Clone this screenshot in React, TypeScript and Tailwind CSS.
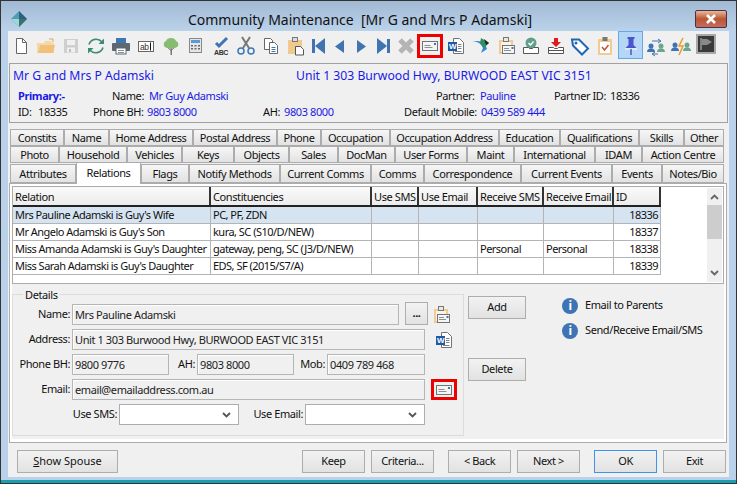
import type { ReactNode } from "react";

const font = "font-['Noto_Sans','Liberation_Sans',sans-serif]";

const tabRows = [
  [
    ["Constits", "w-[54px]"],
    ["Name", "w-[45px]"],
    ["Home Address", "w-[84px]"],
    ["Postal Address", "w-[84px]"],
    ["Phone", "w-[44px]"],
    ["Occupation", "w-[69px]"],
    ["Occupation Address", "w-[109px]"],
    ["Education", "w-[61px]"],
    ["Qualifications", "w-[79px]"],
    ["Skills", "w-[45px]"],
    ["Other", "w-[40px]"],
  ],
  [
    ["Photo", "w-[49px]"],
    ["Household", "w-[68px]"],
    ["Vehicles", "w-[55px]"],
    ["Keys", "w-[52px]"],
    ["Objects", "w-[55px]"],
    ["Sales", "w-[49px]"],
    ["DocMan", "w-[57px]"],
    ["User Forms", "w-[72px]"],
    ["Maint", "w-[47px]"],
    ["International", "w-[81px]"],
    ["IDAM", "w-[47px]"],
    ["Action Centre", "w-[82px]"],
  ],
  [
    ["Attributes", "w-[66px]"],
    ["Relations", "w-[65px]"],
    ["Flags", "w-[48px]"],
    ["Notify Methods", "w-[91px]"],
    ["Current Comms", "w-[91px]"],
    ["Comms", "w-[53px]"],
    ["Correspondence", "w-[97px]"],
    ["Current Events", "w-[91px]"],
    ["Events", "w-[50px]"],
    ["Notes/Bio", "w-[62px]"],
  ],
];

const columns = "grid grid-cols-[198px_161px_47px_59px_66px_70px_47px]";
const headers = ["Relation", "Constituencies", "Use SMS", "Use Email", "Receive SMS", "Receive Email", "ID"];
const rows = [
  ["Mrs Pauline Adamski is Guy's Wife", "PC, PF, ZDN", "", "", "", "", "18336"],
  ["Mr Angelo Adamski is Guy's Son", "kura, SC (S10/D/NEW)", "", "", "", "", "18337"],
  ["Miss Amanda Adamski is Guy's Daughter", "gateway, peng, SC (J3/D/NEW)", "", "", "Personal", "Personal", "18338"],
  ["Miss Sarah Adamski is Guy's Daughter", "EDS, SF (2015/S7/A)", "", "", "", "", "18339"],
];

function Svg({ children }: { children: ReactNode }) {
  return (
    <svg width="24" height="24" viewBox="0 0 24 24" fill="none" className="shrink-0">
      {children}
    </svg>
  );
}

function MailIcon() {
  return (
    <Svg>
      <rect x="4.500" y="7.500" width="15" height="9" fill="#f4f4f4" stroke="#6f7478" />
      <path d="M6.500 11.500h6M6.500 13.500h8" stroke="#8a8f94" />
      <rect x="16" y="9" width="2" height="2" fill="#3f74b4" />
    </Svg>
  );
}

function WordIcon() {
  return (
    <Svg>
      <path d="M9.500 4.500h6l4 4v11h-10z" fill="#fff" stroke="#6f7478" />
      <path d="M14 10.500h3.500M14 12.500h3.500M14 14.500h3.500M11 17.500h6.500" stroke="#7d8287" />
      <rect x="4" y="8" width="9" height="9" fill="#1f5aa6" />
      <text x="8.500" y="15" textAnchor="middle" fontSize="8" fontWeight="700" fill="#fff" fontFamily="Liberation Sans">
        W
      </text>
    </Svg>
  );
}

function PasteMailIcon() {
  return (
    <Svg>
      <path d="M5 6h14v14H5z" fill="#f0cb93" />
      <path d="M7 8h10v10H7z" fill="#fbf3e3" />
      <rect x="9.500" y="3.500" width="5" height="4" fill="#e8e8e8" stroke="#777" />
      <rect x="8.500" y="11.500" width="12" height="8" fill="#f5f5f5" stroke="#6f7478" />
      <path d="M10 14.500h5M10 16.500h7" stroke="#8a8f94" />
      <rect x="17.500" y="13" width="2" height="2" fill="#3f74b4" />
    </Svg>
  );
}

const toolbar: { slot: string; icon: ReactNode; active?: boolean; red?: boolean }[] = [
  { slot: "w-[25px]", icon: <Svg><path d="M7.500 4.500h6l4 4v11h-10z" fill="#fff" stroke="#666" /><path d="M13.500 4.500v4h4" stroke="#666" /></Svg> },
  { slot: "w-[25px]", icon: <Svg><path d="M3 9h7l1-2h6l1 2h2v10H3z" fill="#f5d8a8" /><path d="M4 19l2-8h15l-2 8z" fill="#f2c078" /><path d="M15 5h4v3" stroke="#d9a75c" /></Svg> },
  { slot: "w-[25px]", icon: <Svg><path d="M5 5h14v14H5z" fill="#cfcfcf" /><rect x="8" y="6" width="8" height="5" fill="#f0f0f0" /><rect x="8" y="13.500" width="8" height="5" fill="#f0f0f0" /><rect x="10" y="15" width="2" height="3" fill="#bdbdbd" /></Svg> },
  { slot: "w-[25px]", icon: <Svg><path d="M5 10.500a7.500 7.500 0 0 1 13-2.500" stroke="#3d8b78" strokeWidth="1.600" /><path d="M19 13.500a7.500 7.500 0 0 1-13 2.500" stroke="#3d8b78" strokeWidth="1.600" /><path d="M20 4.500v5.500h-5.500zM4 19.500v-5.500h5.500z" fill="#3d8b78" /></Svg> },
  { slot: "w-[25px]", icon: <Svg><rect x="7" y="4" width="10" height="6" fill="#3f77b5" /><rect x="3" y="9" width="18" height="8" rx="1" fill="#5d6870" /><rect x="7" y="14" width="10" height="6" fill="#fff" stroke="#5d6870" /><path d="M9 16.500h6M9 18.500h6" stroke="#8a8f94" /></Svg> },
  { slot: "w-[25px]", icon: <Svg><rect x="4.500" y="7.500" width="15" height="10" fill="#fff" stroke="#666" /><text x="6" y="15.500" fontSize="8.500" fill="#333" fontFamily="Liberation Sans">ab</text><path d="M16.500 8.500v8" stroke="#111" /></Svg> },
  { slot: "w-[25px]", icon: <Svg><path d="M11.500 13h1.500v8h-1.500z" fill="#777" /><path d="M8.500 13.500l3.500 3 3.500-3" stroke="#777" /><path d="M12 4c3 0 4 1 5 3 3 1 3 6 0 6.500-2 1.500-8 1.500-10 0-3-.5-3-5.500 0-6.500 1-2 2-3 5-3z" fill="#86bb72" /></Svg> },
  { slot: "w-[25px]", icon: <Svg><rect x="5.500" y="4.500" width="12" height="14" fill="#e6e6e6" stroke="#888" /><rect x="7" y="6" width="9" height="3" fill="#5b9bd5" /><path d="M7 11h2v1.500H7zM10.500 11h2v1.500h-2zM14 11h2v1.500h-2zM7 14h2v1.500H7zM10.500 14h2v1.500h-2zM14 14h2v1.500h-2z" fill="#666" /></Svg> },
  { slot: "w-[25px]", icon: <Svg><path d="M7 9l3 3 8-8" stroke="#3f74b4" strokeWidth="3" /><text x="12" y="21" textAnchor="middle" fontSize="7" fontWeight="700" fill="#333" fontFamily="Liberation Sans">ABC</text></Svg> },
  { slot: "w-[25px]", icon: <Svg><path d="M8 3l7 11M16 3l-7 11" stroke="#777" strokeWidth="2" /><circle cx="7" cy="17" r="3" stroke="#3f77b5" strokeWidth="1.500" /><circle cx="17" cy="17" r="3" stroke="#3f77b5" strokeWidth="1.500" /></Svg> },
  { slot: "w-[25px]", icon: <Svg><path d="M5.500 4.500h6l2 2v9h-8z" fill="#fff" stroke="#666" /><path d="M10.500 8.500h5l3 3v8h-8z" fill="#fff" stroke="#666" /><path d="M12.500 13.500h4M12.500 15.500h4M12.500 17.500h4" stroke="#3f77b5" /></Svg> },
  { slot: "w-[25px]", icon: <Svg><path d="M4 6h14v14H4z" fill="#f0c98f" /><rect x="8.500" y="3.500" width="5" height="4" fill="#ddd" stroke="#777" /><path d="M11.500 12.500h5l3 3v5.500h-8z" fill="#fff" stroke="#555" /></Svg> },
  { slot: "w-[21px]", icon: <Svg><path d="M5 5h3v14H5z" fill="#3f74b0" /><path d="M18 4v16L8 12z" fill="#3f74b0" /></Svg> },
  { slot: "w-[21px]", icon: <Svg><path d="M16 6v13l-9-6.500z" fill="#3f74b0" /></Svg> },
  { slot: "w-[22px]", icon: <Svg><path d="M8 6v13l9-6.500z" fill="#3f74b0" /></Svg> },
  { slot: "w-[21px]", icon: <Svg><path d="M16 5h3v14h-3z" fill="#3f74b0" /><path d="M6 4v16l10-8z" fill="#3f74b0" /></Svg> },
  { slot: "w-[25px]", icon: <Svg><path d="M6 6l12 12M18 6L6 18" stroke="#b4b4b4" strokeWidth="5" /></Svg> },
  { slot: "w-[25px]", icon: <MailIcon />, red: true },
  { slot: "w-[25px]", icon: <WordIcon /> },
  { slot: "w-[26px]", icon: <Svg><path d="M3 8c6-1 9 2 11 6l-2 5 6-4c-2-6-7-10-15-7z" fill="#2e86d6" /><path d="M12 4l8 5-5 5-4-5z" fill="#2f8f5e" /><path d="M15 5l5 4-3 2z" fill="#222" /></Svg> },
  { slot: "w-[24px]", icon: <PasteMailIcon /> },
  { slot: "w-[25px]", icon: <Svg><circle cx="12" cy="9" r="5.500" fill="#5f9f8c" /><path d="M9.500 9l2 2 3-3.500" stroke="#fff" strokeWidth="1.500" /><path d="M4.500 13.500h5l1 1h3l1-1h5v6h-15z" fill="#fff" stroke="#555" /></Svg> },
  { slot: "w-[25px]", icon: <Svg><path d="M10 4h4v4h3l-5 5-5-5h3z" fill="#e01b1b" /><path d="M4.500 13.500h5l1 1h3l1-1h5v6h-15z" fill="#fff" stroke="#555" /><path d="M4.500 16.500h15" stroke="#555" /></Svg> },
  { slot: "w-[24px]", icon: <Svg><path d="M4 5.500h7l9 9-6 6-9-9z" fill="#fff" stroke="#1f66b5" strokeWidth="2" /><circle cx="8" cy="9" r="1.500" fill="#1f66b5" /></Svg> },
  { slot: "w-[26px]", icon: <Svg><rect x="5" y="5" width="14" height="16" rx="1" fill="#f0cb93" /><rect x="7" y="8" width="10" height="11" fill="#fff" /><rect x="9.500" y="3" width="5" height="4" fill="#777" /><path d="M9 13l2.500 3 4-5" stroke="#c9503f" strokeWidth="1.500" /></Svg> },
  { slot: "w-[25px]", active: true, icon: <Svg><path d="M8.500 4h7v2h-1v6l3 3h-11l3-3V6h-1z" fill="#4b55cc" /><path d="M6 16h12" stroke="#fff" /><path d="M12 16v6" stroke="#4b55cc" strokeWidth="1.500" /></Svg> },
  { slot: "w-[25px]", icon: <Svg><circle cx="7" cy="12" r="2.500" fill="#3f74b4" /><path d="M3 18c0-5 8-5 8 0z" fill="#3f74b4" /><circle cx="17" cy="12" r="2.500" fill="#6aa68f" /><path d="M13 18c0-5 8-5 8 0z" fill="#6aa68f" /><path d="M8 7h8M14 5l3 2-3 2M14 20H9M11 18l-3 2 3 2" stroke="#3f74b4" /></Svg> },
  { slot: "w-[25px]", icon: <Svg><circle cx="6" cy="11" r="2.500" fill="#3f74b4" /><path d="M2 17c0-5 8-5 8 0z" fill="#3f74b4" /><circle cx="18" cy="11" r="2.500" fill="#6aa68f" /><path d="M14 17c0-5 8-5 8 0z" fill="#6aa68f" /><path d="M14 4l-4 8h4l-4 9" stroke="#ee9a2c" strokeWidth="1.500" /></Svg> },
  { slot: "w-[25px]", icon: <svg width="20" height="20" viewBox="0 0 20 20" className="-mt-[4px]"><rect x="1" y="1" width="18" height="18" fill="#3a3a3a" stroke="#a8a8a8" strokeWidth="2" /><path d="M5 4v12" stroke="#9a9a9a" strokeWidth="1.500" /><path d="M6 5h5l5 3-5 3H6z" fill="#8a8a8a" /></svg> },
];

function Btn({ children, className }: { children: ReactNode; className: string }) {
  return (
    <button className={`flex h-[23px] shrink-0 items-center justify-center border border-[#adadad] bg-gradient-to-b from-[#f2f2f2] to-[#e2e2e2] text-[#111] ${className}`}>
      {children}
    </button>
  );
}

function Field({ children, className }: { children?: ReactNode; className: string }) {
  return (
    <div className={`flex h-[21px] items-center border border-[#b5b5b5] bg-[#f0f0f0] pl-[2px] leading-none text-[#222] shadow-[inset_1px_1px_0_#fff] ${className}`}>
      {children}
    </div>
  );
}

function Label({ children, className }: { children: ReactNode; className: string }) {
  return <span className={`text-right text-[#111] ${className}`}>{children}</span>;
}

function Select({ className }: { className: string }) {
  return (
    <div className={`flex h-[21px] items-center justify-end border border-[#adadad] bg-white pr-[7px] ${className}`}>
      <svg width="9" height="6" viewBox="0 0 9 6">
        <path d="M1 1l3.500 3.500L8 1" stroke="#555" strokeWidth="1.800" fill="none" />
      </svg>
    </div>
  );
}

function Info({ children }: { children: ReactNode }) {
  return (
    <div className="flex h-[17px] items-center gap-[7px] text-[#111]">
      <span className="flex h-4 w-4 items-center justify-center rounded-full bg-[#3f74b4] text-[12px] font-bold leading-none text-white">i</span>
      {children}
    </div>
  );
}

export default function App() {
  return (
    <div className={`${font} h-[484px] w-[737px] overflow-hidden whitespace-nowrap border border-[#333] bg-[#b9d1ea] text-[11px] tracking-[-0.4px]`}>
      <div className="flex h-[482px] flex-col border-b-[3px] border-b-[#1a9fb0]">
        <div className="flex h-[30px] shrink-0 items-center bg-gradient-to-b from-[#a2b9d3] to-[#bad2ea] pl-[9px] pr-[9px] pt-[5px]">
          <svg width="18" height="18" viewBox="0 0 18 18">
            <path d="M9 1l8 8-8 8-8-8z" fill="#4f9db0" />
            <path d="M9 1l8 8H9z" fill="#2c5f80" />
            <path d="M1 9l8 8V9z" fill="#9fd6d8" />
            <path d="M9 9h8l-8 8z" fill="#3f6f6a" />
          </svg>
          <div className="mt-[2px] flex-1 whitespace-pre pr-[3px] text-center text-[14px] leading-none tracking-normal text-[#111]">Community Maintenance  [Mr G and Mrs P Adamski]</div>
          <div className="flex h-[18px] w-[32px] items-center justify-center rounded-[2px] border border-[#50303a] bg-gradient-to-b from-[#e8b8a0] via-[#b8582e] to-[#c66a62]">
            <svg width="14" height="10" viewBox="0 0 14 10">
              <path d="M3 1l8 8M11 1L3 9" stroke="#fff" strokeWidth="2.600" />
            </svg>
          </div>
        </div>

        <div className="mx-[7px] mb-[3px] flex flex-1 flex-col bg-[#f0f0f0]">
          <div className="mb-[2px] flex h-[30px] shrink-0 items-center">
            {toolbar.map((t, i) => (
              <div key={i} className={`flex h-[28px] shrink-0 items-center justify-center ${t.slot} ${t.active ? "self-start border border-[#66a7e8] bg-[#b6d6f7]" : ""}`}>
                {t.red ? <div className="-ml-[1px] flex h-[24px] w-[26px] shrink-0 items-center justify-center border-[3px] border-[#ee0000]"><MailIcon /></div> : t.icon}
              </div>
            ))}
          </div>

          <div className="mx-[1px] h-[60px] shrink-0 border border-[#a0a0a0] pl-[3px]">
            <div className="flex h-[24px] items-center text-[12.200px] tracking-normal text-[#1a1ae6]">
              <span className="w-[283px]">Mr G and Mrs P Adamski</span>
              <span>Unit 1 303 Burwood Hwy, BURWOOD EAST VIC 3151</span>
            </div>
            <div className="flex h-[16px] items-center pl-[5px] text-[#111]">
              <span className="w-[94px] font-bold text-[#1a1ae6]">Primary:-</span>
              <span className="w-[37px]">Name:</span>
              <span className="w-[287px] text-[#1a1ae6]">Mr Guy Adamski</span>
              <span className="w-[44px]">Partner:</span>
              <span className="w-[74px] text-[#1a1ae6]">Pauline</span>
              <span className="w-[56px]">Partner ID:</span>
              <span>18336</span>
            </div>
            <div className="flex h-[16px] items-center pl-[5px] text-[#111]">
              <span className="w-[20px]">ID:</span>
              <span className="w-[55px]">18335</span>
              <span className="w-[54px]">Phone BH:</span>
              <span className="w-[116px] text-[#1a1ae6]">9803 8000</span>
              <span className="w-[21px]">AH:</span>
              <span className="w-[120px] text-[#1a1ae6]">9803 8000</span>
              <span className="w-[77px]">Default Mobile:</span>
              <span className="text-[#1a1ae6]">0439 589 444</span>
            </div>
          </div>

          <div className="ml-[2px] mt-[5px] shrink-0">
            {tabRows.map((row, r) => (
              <div key={r} className={`flex items-end ${r === 2 ? "h-[20px]" : r === 0 ? "h-[18px]" : "h-[17px]"}`}>
                {row.map(([name, w]) => {
                  const selected = name === "Relations";
                  return (
                    <div
                      key={name}
                      className={`flex shrink-0 items-center justify-center border border-[#acacac] leading-none text-[#111] ${w} ${
                        selected
                          ? "relative z-10 -mb-[1px] -mt-[2px] h-[22px] border-b-0 bg-white pb-[3px]"
                          : `bg-gradient-to-b from-[#f6f6f6] to-[#e2e2e2] ${r === 2 ? "h-[19px]" : "h-[17px]"}`
                      }`}
                    >
                      {name}
                    </div>
                  );
                })}
              </div>
            ))}
          </div>

          <div className="ml-[1px] mr-[2px] h-[260px] shrink-0 border border-[#acacac] bg-white p-[2px]">
            <div className="flex h-[98px] border border-[#acacac] bg-white">
              <div className="w-[693px]">
                <div className={`${columns} h-[20px] w-[648px] border-b-2 border-[#222] bg-gradient-to-b from-[#fafafa] to-[#ececec]`}>
                  {headers.map((h) => (
                    <div key={h} className="flex items-center border-r-2 border-[#333] pl-[2px] leading-none text-[#111]">{h}</div>
                  ))}
                </div>
                {rows.map((row, r) => (
                  <div key={r} className={`${columns} h-[17px] w-[648px] border-b border-[#b4b4b4] tracking-[-0.52px] ${r === 0 ? "bg-[#d6e4f1]" : "bg-white"}`}>
                    {row.map((c, i) => (
                      <div key={i} className={`flex items-center border-r border-[#b4b4b4] px-[2px] pb-[1px] leading-none text-[#111] ${i === 6 ? "justify-end" : ""}`}>{c}</div>
                    ))}
                  </div>
                ))}
              </div>
              <div className="my-[1px] ml-auto mr-[1px] flex w-[15px] flex-col items-center bg-[#f0f0f0]">
                <svg className="mt-[6px]" width="9" height="6" viewBox="0 0 9 6"><path d="M1 5l3.500-3.500L8 5" stroke="#666" strokeWidth="1.800" fill="none" /></svg>
                <div className="mt-[5px] h-[34px] w-full bg-[#cdcdcd]" />
                <svg className="mt-[31px]" width="9" height="6" viewBox="0 0 9 6"><path d="M1 1l3.500 3.500L8 1" stroke="#666" strokeWidth="1.800" fill="none" /></svg>
              </div>
            </div>

            <div className="flex h-[155px] bg-[#f0f0f0] pt-[5px]">
              <fieldset className="h-[147px] w-[452px] shrink-0 border border-[#dcdcdc] pl-[2px]">
                <legend className="ml-[8px] px-[2px] leading-none text-[#111]">Details</legend>
                <div className="flex flex-col gap-[4px] pt-[4px]">
                  <div className="flex h-[21px] items-center">
                    <Label className="w-[55px]">Name:</Label>
                    <Field className="ml-[2px] w-[327px]">Mrs Pauline Adamski</Field>
                    <Btn className="mb-[2px] ml-[6px] w-[23px] font-bold">...</Btn>
                    <div className="ml-[1px] flex h-[21px] items-center"><PasteMailIcon /></div>
                  </div>
                  <div className="flex h-[21px] items-center">
                    <Label className="w-[55px]">Address:</Label>
                    <Field className="ml-[2px] w-[353px]">Unit 1 303 Burwood Hwy, BURWOOD EAST VIC 3151</Field>
                    <div className="ml-[7px] flex h-[21px] items-center"><WordIcon /></div>
                  </div>
                  <div className="flex h-[21px] items-center">
                    <Label className="w-[55px]">Phone BH:</Label>
                    <Field className="ml-[2px] w-[97px]">9800 9776</Field>
                    <Label className="ml-[6px] w-[20px]">AH:</Label>
                    <Field className="ml-[2px] w-[97px]">9803 8000</Field>
                    <Label className="ml-[6px] w-[25px]">Mob:</Label>
                    <Field className="ml-[2px] w-[98px]">0409 789 468</Field>
                  </div>
                  <div className="flex h-[21px] items-center">
                    <Label className="w-[55px]">Email:</Label>
                    <Field className="ml-[2px] w-[353px]">email@emailaddress.com.au</Field>
                    <div className="ml-[6px] flex h-[21px] w-[26px] items-center justify-center border-[3px] border-[#ee0000]"><MailIcon /></div>
                  </div>
                  <div className="flex h-[21px] items-center">
                    <Label className="w-[102px]">Use SMS:</Label>
                    <Select className="ml-[2px] w-[120px]" />
                    <Label className="ml-[6px] w-[58px]">Use Email:</Label>
                    <Select className="ml-[2px] w-[120px]" />
                  </div>
                </div>
              </fieldset>

              <div className="ml-[4px] flex w-[58px] shrink-0 flex-col pt-[7px]">
                <Btn className="w-[58px]">Add</Btn>
                <Btn className="mt-[39px] w-[58px]">Delete</Btn>
              </div>

              <div className="ml-[36px] flex flex-col gap-[8px] pt-[8px]">
                <Info>Email to Parents</Info>
                <Info>Send/Receive Email/SMS</Info>
              </div>
            </div>
          </div>

          <div className="flex flex-1 items-start pl-[9px] pr-[3px] pt-[7px]">
            <Btn className="w-[101px] tracking-normal"><span><span className="underline">S</span>how Spouse</span></Btn>
            <Btn className="ml-[184px] w-[63px]">Keep</Btn>
            <Btn className="ml-[6px] w-[63px]">Criteria...</Btn>
            <Btn className="ml-[14px] w-[63px]">&lt; Back</Btn>
            <Btn className="ml-[6px] w-[63px]">Next &gt;</Btn>
            <Btn className="ml-[14px] w-[63px] !border-[#3f93e8]">OK</Btn>
            <Btn className="ml-[6px] w-[63px]">Exit</Btn>
          </div>
        </div>
      </div>
    </div>
  );
}
